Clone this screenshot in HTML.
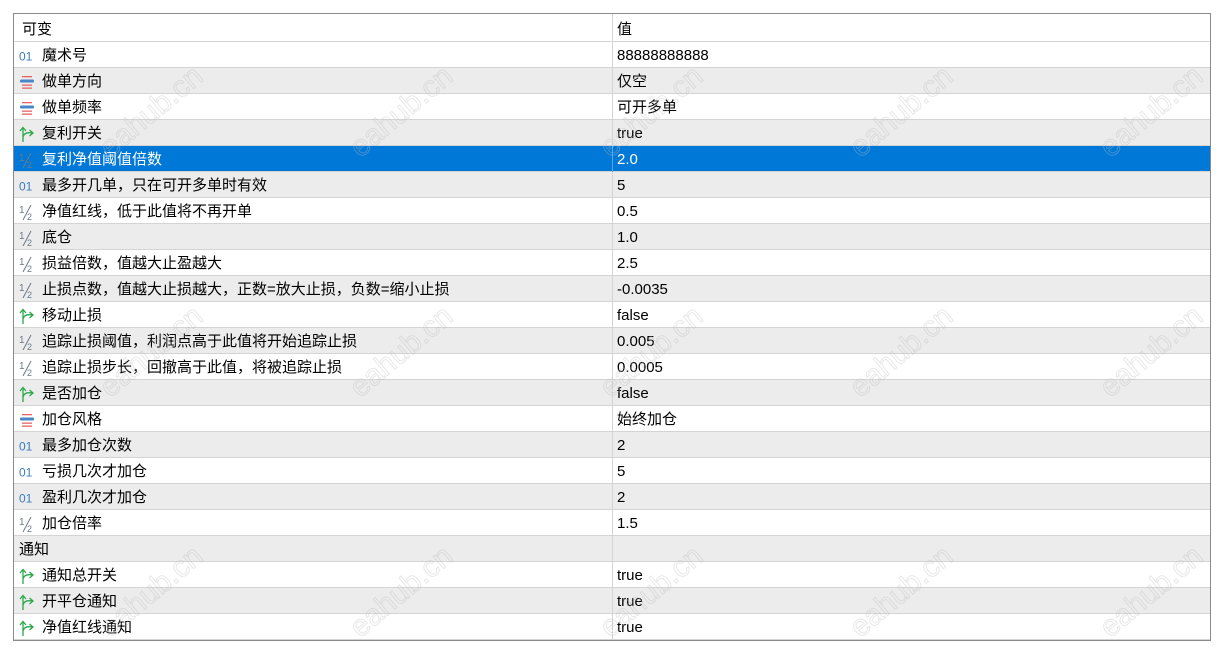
<!DOCTYPE html>
<html><head><meta charset="utf-8"><style>
body{margin:0;width:1222px;height:648px;background:#fff;position:relative;overflow:hidden;font-family:"Liberation Sans","Noto Sans CJK SC",sans-serif;font-size:15px;color:#000}
#t{position:absolute;left:13px;top:13px;width:1196px;height:626px;border:1px solid #8a8a8a}
.r{position:absolute;left:0;width:1196px;height:25px;border-bottom:1px solid #d4d4d4}
.g{background:#ececec}
.s{background:#0078d7;color:#fff}
.c1,.c2{position:absolute;top:0;height:25px;line-height:28px;white-space:nowrap}
.c1{left:28px}
.c2{left:603px}
.v{position:absolute;left:598px;top:0;width:1px;height:26px;background:#d4d4d4}
.s .v{background:#5aa6e6}
.ic{position:absolute;left:5px;top:6px;width:16px;height:16px}
.wm{position:absolute;color:transparent;-webkit-text-stroke:1px rgba(190,190,190,.35);font-size:30px;transform:rotate(-40deg);font-family:"Liberation Sans",sans-serif;white-space:nowrap}
</style></head><body>
<div id="t">
<div class="r" style="top:0;height:27px"><span class="c1" style="left:8px;line-height:31px">可变</span><div class="v" style="height:28px"></div><span class="c2" style="line-height:31px">值</span></div>
</div>
<script>
var I={
n:'<svg class="ic" viewBox="0 0 16 16"><text x="0" y="12.5" font-size="12" fill="#3a7cc0" font-family="Liberation Sans">01</text></svg>',
e:'<svg class="ic" viewBox="0 0 16 16"><rect x="3" y="2" width="10" height="1.3" fill="#e46464"/><rect x="1" y="5.5" width="14" height="3" rx="1.3" fill="#4a86c8"/><rect x="3" y="10.5" width="10" height="1.3" fill="#e46464"/><rect x="3" y="13.5" width="10" height="1.3" fill="#e46464"/></svg>',
b:'<svg class="ic" viewBox="0 0 16 16"><path d="M4 16V2M1 5L4 1.5 7 5M4 11C5 7 8 6 13 7M10.5 4L14 7 10.5 10" stroke="#2aa84a" stroke-width="1.3" fill="none"/></svg>',
h:'<svg class="ic" viewBox="0 0 16 16"><text x="0" y="9" font-size="10" fill="#6a7a8a" font-family="Liberation Sans">1</text><path d="M12 1L4 16" stroke="#6a7a8a" stroke-width="1"/><text x="8" y="16" font-size="9" fill="#6a7a8a" font-family="Liberation Sans">2</text></svg>',
x:''};
var R=[['n','魔术号','88888888888'],['e','做单方向','仅空'],['e','做单频率','可开多单'],['b','复利开关','true'],['h','复利净值阈值倍数','2.0'],['n','最多开几单，只在可开多单时有效','5'],['h','净值红线，低于此值将不再开单','0.5'],['h','底仓','1.0'],['h','损益倍数，值越大止盈越大','2.5'],['h','止损点数，值越大止损越大，正数=放大止损，负数=缩小止损','-0.0035'],['b','移动止损','false'],['h','追踪止损阈值，利润点高于此值将开始追踪止损','0.005'],['h','追踪止损步长，回撤高于此值，将被追踪止损','0.0005'],['b','是否加仓','false'],['e','加仓风格','始终加仓'],['n','最多加仓次数','2'],['n','亏损几次才加仓','5'],['n','盈利几次才加仓','2'],['h','加仓倍率','1.5'],['x','通知',''],['b','通知总开关','true'],['b','开平仓通知','true'],['b','净值红线通知','true']];
var t=document.getElementById('t'),h='';
R.forEach(function(r,i){var y=28+i*26;var cls=i==4?'r s':(i%2?'r g':'r');
h+='<div class="'+cls+'" style="top:'+y+'px">'+I[r[0]]+'<span class="c1"'+(r[0]=='x'?' style="left:5px"':'')+'>'+r[1]+'</span><div class="v"></div><span class="c2">'+r[2]+'</span></div>';});
t.innerHTML+=h;
var w='';for(var yy=0;yy<3;yy++)for(var xx=0;xx<5;xx++){w+='<div class="wm" style="left:'+(90+xx*250)+'px;top:'+(95+yy*240)+'px">eahub.cn</div>';}
document.body.insertAdjacentHTML('beforeend',w);
</script>
</body></html>
